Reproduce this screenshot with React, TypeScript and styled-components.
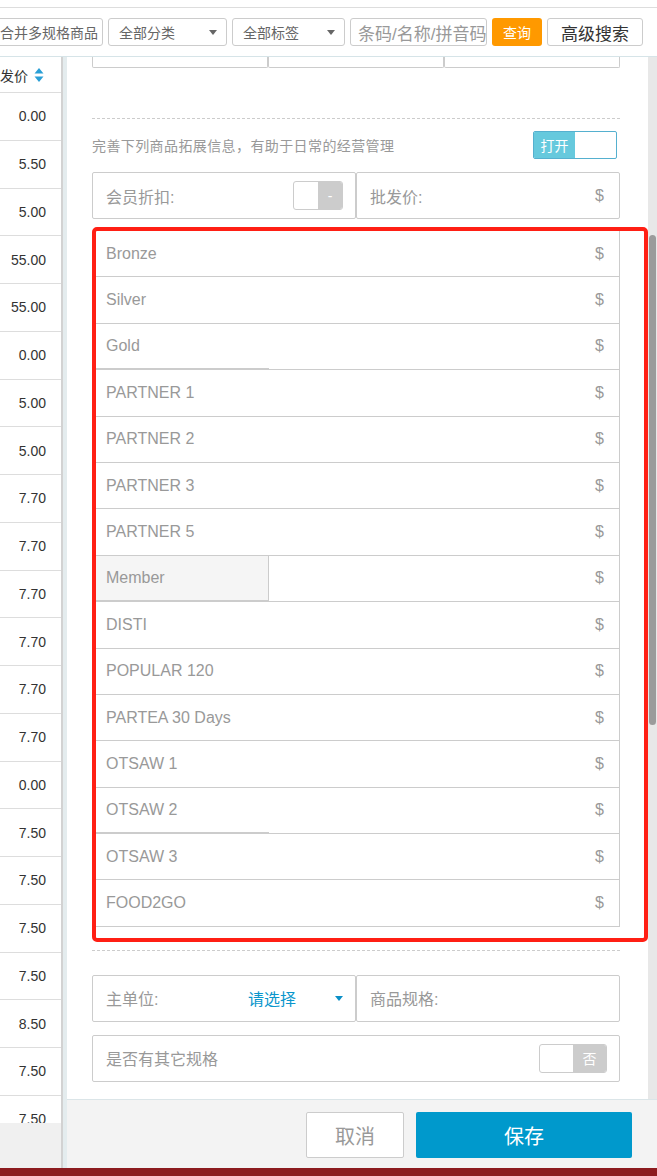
import React from 'react'
import styled, { createGlobalStyle } from 'styled-components'

const GlobalStyle = createGlobalStyle`
  html, body {
    margin: 0;
    padding: 0;
  }
  body {
    width: 657px;
    height: 1176px;
    overflow: hidden;
    background: #fff;
    font-family: "Liberation Sans", "Noto Sans CJK SC", sans-serif;
  }
  * {
    box-sizing: border-box;
  }
`

const Page = styled.div`
  width: 657px;
  height: 1176px;
  display: flex;
  flex-direction: column;
  overflow: hidden;
`

const Toolbar = styled.div`
  flex: none;
  margin-top: 7px;
  height: 50px;
  border-top: 1px solid #ddd;
  border-bottom: 1px solid #d6e4e8;
  display: flex;
  justify-content: flex-end;
  align-items: flex-start;
  gap: 5px;
  padding: 10px 14px 0 0;
  overflow: hidden;
`

const Control = styled.div<{ $w: number }>`
  flex: none;
  width: ${(p) => p.$w}px;
  height: 28px;
  border: 1px solid #ccc;
  border-radius: 3px;
  background: #fff;
  display: flex;
  align-items: center;
  justify-content: space-between;
  padding: 0 9px 0 10px;
  font-size: 14px;
  color: #666;
  white-space: nowrap;
`

const SearchInput = styled(Control)`
  padding-left: 7px;
  font-size: 17px;
  color: #999;
`

const QueryButton = styled.div`
  flex: none;
  width: 50px;
  height: 28px;
  border-radius: 3px;
  background: #ff9900;
  color: #fff;
  font-size: 14px;
  display: flex;
  align-items: center;
  justify-content: center;
`

const AdvButton = styled(Control)`
  justify-content: center;
  padding: 0;
  font-size: 17px;
  color: #333;
`

const Caret = styled.span<{ $color?: string }>`
  flex: none;
  width: 0;
  height: 0;
  border-left: 4.5px solid transparent;
  border-right: 4.5px solid transparent;
  border-top: 5px solid ${(p) => p.$color || '#666'};
`

const Main = styled.div`
  flex: 1;
  min-height: 0;
  display: flex;
`

const LeftPane = styled.div`
  flex: none;
  width: 63px;
  border-right: 2px solid #d2d2d2;
  display: flex;
  flex-direction: column;
`

const PriceTable = styled.div`
  height: 1066px;
  overflow: hidden;
`

const HeadCell = styled.div`
  height: 36px;
  border-bottom: 1px solid #ddd;
  display: flex;
  align-items: center;
  justify-content: flex-end;
  gap: 6px;
  padding-right: 17px;
  font-size: 14px;
  color: #333;
  white-space: nowrap;
  overflow: hidden;

  & > * {
    flex: none;
  }
`

const ValueCell = styled.div`
  height: 47.75px;
  border-bottom: 1px solid #ddd;
  display: flex;
  align-items: center;
  justify-content: flex-end;
  padding-right: 15px;
  font-size: 14px;
  color: #333;
`

const LeftFiller = styled.div`
  flex: 1;
  background: #f0f0f0;
`

const Gutter = styled.div`
  flex: none;
  width: 4px;
  background: #e4ecee;
`

const Modal = styled.div`
  flex: 1;
  min-width: 0;
  display: flex;
  flex-direction: column;
`

const Body = styled.div`
  flex: 1;
  min-height: 0;
  display: flex;
`

const Content = styled.div`
  flex: 1;
  min-width: 0;
  padding: 0 28px 0 25px;
  overflow: hidden;
`

const Track = styled.div`
  flex: none;
  width: 9px;
  background: #e8e8e8;
  padding: 0 1px;
`

const Thumb = styled.div`
  margin-top: 178px;
  height: 490px;
  border-radius: 4px;
  background: #9b9b9b;
`

const CutRow = styled.div`
  height: 11px;
  display: grid;
  grid-template-columns: 1fr 1fr 1fr;
`

const CutCell = styled.div`
  border: 1px solid #ccc;
  border-top: none;
  border-radius: 0 0 2px 2px;
`

const Dashed = styled.div<{ $top: number }>`
  margin-top: ${(p) => p.$top}px;
  border-top: 1px dashed #ccc;
`

const HintRow = styled.div`
  margin-top: 12px;
  height: 28px;
  display: flex;
  align-items: center;
  justify-content: space-between;
  padding-right: 3px;
`

const Hint = styled.span`
  font-size: 14px;
  letter-spacing: 0.4px;
  color: #999;
`

const OnSwitch = styled.div`
  width: 84px;
  height: 28px;
  border: 1px solid #55b0cf;
  border-radius: 2px;
  display: flex;
  overflow: hidden;
  background: #fff;
`

const OnLabel = styled.div`
  width: 41px;
  background: #66c9dd;
  color: #fff;
  font-size: 14px;
  display: flex;
  align-items: center;
  justify-content: center;
`

const Pair = styled.div<{ $top: number }>`
  margin-top: ${(p) => p.$top}px;
  height: 47px;
  display: grid;
  grid-template-columns: 1fr 1fr;
`

const Field = styled.div<{ $top?: number }>`
  margin-top: ${(p) => p.$top || 0}px;
  height: 47px;
  border: 1px solid #ccc;
  border-radius: 2px;
  display: flex;
  align-items: center;
  justify-content: space-between;
  padding: 0 12px 0 13px;
  font-size: 16px;
  color: #999;
  white-space: nowrap;
`

const Dollar = styled.span`
  margin-right: 3px;
`

const OffSwitch = styled.div<{ $w: number }>`
  width: ${(p) => p.$w}px;
  height: 29px;
  border: 1px solid #ccc;
  border-radius: 3px;
  display: flex;
  overflow: hidden;
  background: #fff;
`

const OffKnob = styled.div`
  flex: 1;
`

const OffLabel = styled.div`
  flex: 1;
  background: #ccc;
  color: #fff;
  font-size: 14px;
  display: flex;
  align-items: center;
  justify-content: center;
`

const Highlight = styled.div`
  margin-top: 8px;
  margin-right: -28px;
  border: 4px solid #ff1f14;
  border-radius: 5px;
  padding: 0 24px 11px 0;
`

const PriceRow = styled.div<{ $seam?: boolean }>`
  height: 46.4px;
  border-bottom: 1px solid #ccc;
  border-right: 1px solid #ccc;
  display: flex;
  align-items: center;
  justify-content: space-between;
  padding-right: 15px;
  font-size: 16px;
  color: #999;
  background: ${(p) =>
    p.$seam ? 'linear-gradient(#ccc, #ccc) left bottom / 173px 1px no-repeat' : 'none'};
`

const RowLabel = styled.div<{ $shaded?: boolean }>`
  align-self: stretch;
  display: flex;
  align-items: center;
  padding-left: 10px;
  width: ${(p) => (p.$shaded ? '173px' : 'auto')};
  background: ${(p) => (p.$shaded ? '#f5f5f5' : 'transparent')};
  border-right: ${(p) => (p.$shaded ? '1px solid #ccc' : 'none')};
  box-shadow: ${(p) => (p.$shaded ? 'inset 0 -1px #ccc' : 'none')};
`

const UnitLabel = styled.span`
  width: 142px;
`

const UnitValue = styled.span`
  flex: 1;
  color: #0a96cc;
`

const Footer = styled.div`
  flex: none;
  height: 69px;
  border-top: 1px solid #dbe5e8;
  background: #f3f3f3;
  display: flex;
  justify-content: flex-end;
  align-items: flex-start;
  gap: 12px;
  padding: 12px 25px 0 0;
`

const CancelButton = styled.div`
  width: 98px;
  height: 46px;
  border: 1px solid #ccc;
  border-radius: 2px;
  background: #fff;
  color: #999;
  font-size: 20px;
  display: flex;
  align-items: center;
  justify-content: center;
`

const SaveButton = styled.div`
  width: 216px;
  height: 46px;
  border-radius: 2px;
  background: #0099cc;
  color: #fff;
  font-size: 20px;
  display: flex;
  align-items: center;
  justify-content: center;
`

const BottomBar = styled.div`
  flex: none;
  height: 8px;
  background: #8c1b1f;
`

const values = [
  '0.00', '5.50', '5.00', '55.00', '55.00', '0.00', '5.00', '5.00', '7.70', '7.70', '7.70',
  '7.70', '7.70', '7.70', '0.00', '7.50', '7.50', '7.50', '7.50', '8.50', '7.50', '7.50',
]

const levels = [
  'Bronze', 'Silver', 'Gold', 'PARTNER 1', 'PARTNER 2', 'PARTNER 3', 'PARTNER 5', 'Member',
  'DISTI', 'POPULAR 120', 'PARTEA 30 Days', 'OTSAW 1', 'OTSAW 2', 'OTSAW 3', 'FOOD2GO',
]

function SortIcon() {
  return (
    <svg width="10" height="16" viewBox="0 0 10 16">
      <path d="M5 1 L9.5 6.5 H0.5 Z" fill="#2a9fd6" />
      <path d="M5 15 L9.5 9.5 H0.5 Z" fill="#2a9fd6" />
    </svg>
  )
}

export default function App() {
  return (
    <Page>
      <GlobalStyle />
      <Toolbar>
        <Control $w={114}>合并多规格商品</Control>
        <Control $w={119}>
          全部分类
          <Caret />
        </Control>
        <Control $w={113}>
          全部标签
          <Caret />
        </Control>
        <SearchInput $w={137}>条码/名称/拼音码</SearchInput>
        <QueryButton>查询</QueryButton>
        <AdvButton $w={96}>高级搜索</AdvButton>
      </Toolbar>
      <Main>
        <LeftPane>
          <PriceTable>
            <HeadCell>
              <span>批发价</span>
              <SortIcon />
            </HeadCell>
            {values.map((v, i) => (
              <ValueCell key={i}>{v}</ValueCell>
            ))}
          </PriceTable>
          <LeftFiller />
        </LeftPane>
        <Gutter />
        <Modal>
          <Body>
            <Content>
              <CutRow>
                <CutCell />
                <CutCell />
                <CutCell />
              </CutRow>
              <Dashed $top={50} />
              <HintRow>
                <Hint>完善下列商品拓展信息，有助于日常的经营管理</Hint>
                <OnSwitch>
                  <OnLabel>打开</OnLabel>
                </OnSwitch>
              </HintRow>
              <Pair $top={13}>
                <Field>
                  会员折扣:
                  <OffSwitch $w={50}>
                    <OffKnob />
                    <OffLabel>-</OffLabel>
                  </OffSwitch>
                </Field>
                <Field>
                  批发价:
                  <Dollar>$</Dollar>
                </Field>
              </Pair>
              <Highlight>
                {levels.map((name, i) => (
                  <PriceRow key={name} $seam={i % 5 === 2 && name !== 'Member'}>
                    <RowLabel $shaded={name === 'Member'}>{name}</RowLabel>$
                  </PriceRow>
                ))}
              </Highlight>
              <Dashed $top={8} />
              <Pair $top={24}>
                <Field>
                  <UnitLabel>主单位:</UnitLabel>
                  <UnitValue>请选择</UnitValue>
                  <Caret $color="#0a8fc7" />
                </Field>
                <Field>商品规格:</Field>
              </Pair>
              <Field $top={13}>
                是否有其它规格
                <OffSwitch $w={68}>
                  <OffKnob />
                  <OffLabel>否</OffLabel>
                </OffSwitch>
              </Field>
            </Content>
            <Track>
              <Thumb />
            </Track>
          </Body>
          <Footer>
            <CancelButton>取消</CancelButton>
            <SaveButton>保存</SaveButton>
          </Footer>
        </Modal>
      </Main>
      <BottomBar />
    </Page>
  )
}
